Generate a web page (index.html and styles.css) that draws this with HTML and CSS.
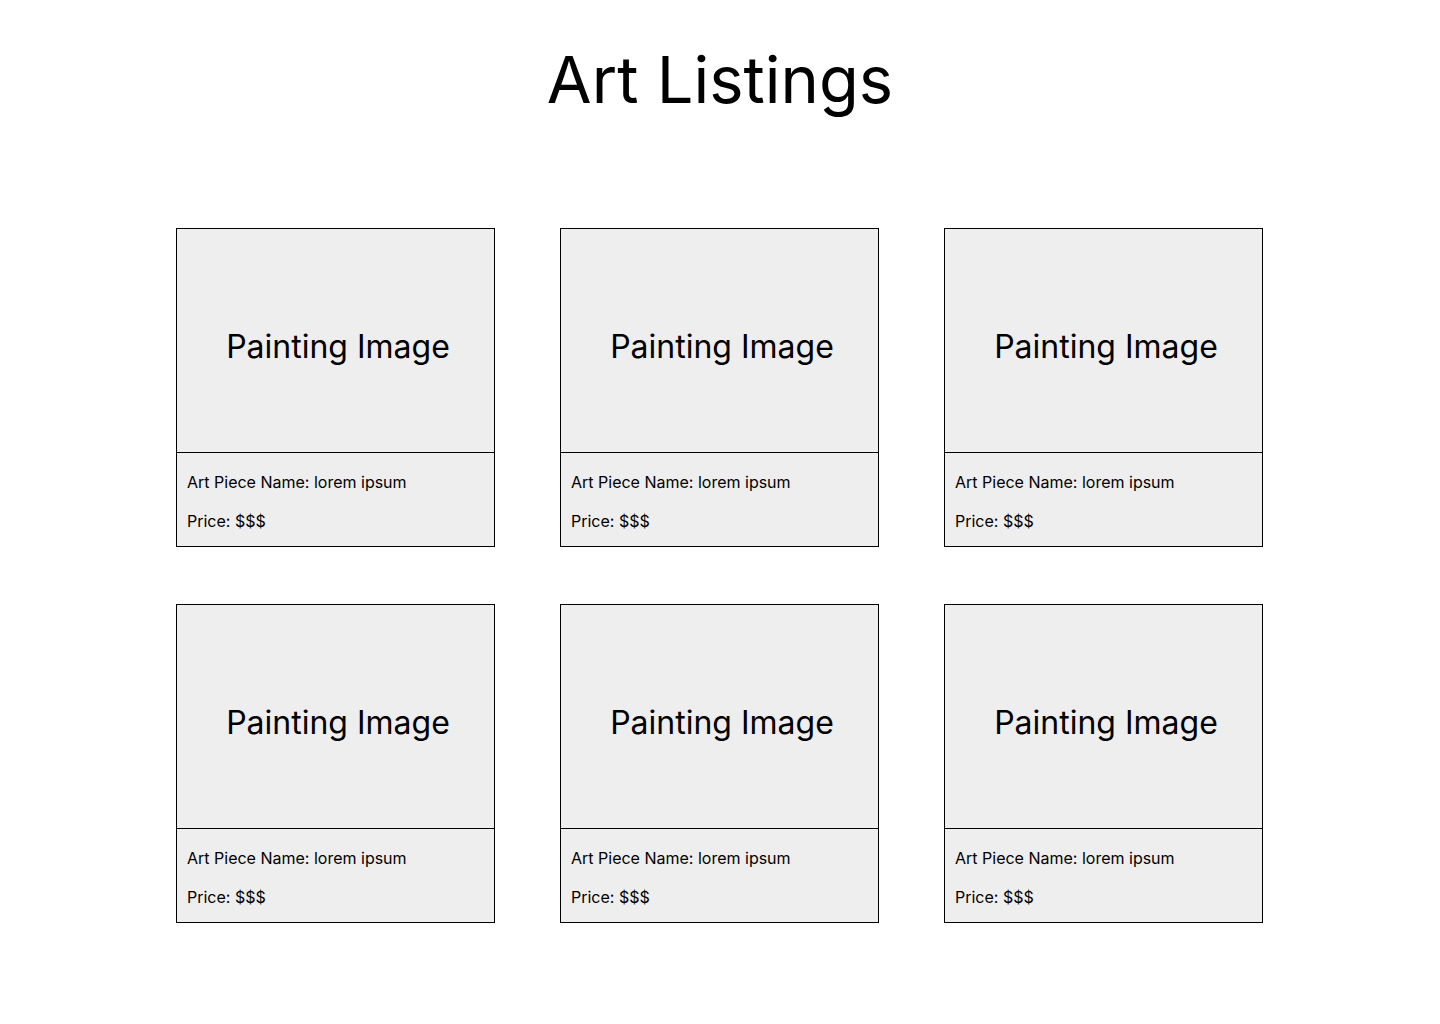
FILE: index.html
```html
<!DOCTYPE html>
<html lang="en">
<head>
<meta charset="utf-8">
<title>Art Listings</title>
<link rel="stylesheet" href="styles.css">
</head>
<body>
<h1 class="title">Art Listings</h1>
<main class="grid">
  <div class="card">
    <div class="card-image">Painting Image</div>
    <div class="card-info"><p>Art Piece Name: lorem ipsum</p><p>Price: $$$</p></div>
  </div>
  <div class="card">
    <div class="card-image">Painting Image</div>
    <div class="card-info"><p>Art Piece Name: lorem ipsum</p><p>Price: $$$</p></div>
  </div>
  <div class="card">
    <div class="card-image">Painting Image</div>
    <div class="card-info"><p>Art Piece Name: lorem ipsum</p><p>Price: $$$</p></div>
  </div>
  <div class="card">
    <div class="card-image">Painting Image</div>
    <div class="card-info"><p>Art Piece Name: lorem ipsum</p><p>Price: $$$</p></div>
  </div>
  <div class="card">
    <div class="card-image">Painting Image</div>
    <div class="card-info"><p>Art Piece Name: lorem ipsum</p><p>Price: $$$</p></div>
  </div>
  <div class="card">
    <div class="card-image">Painting Image</div>
    <div class="card-info"><p>Art Piece Name: lorem ipsum</p><p>Price: $$$</p></div>
  </div>
</main>
</body>
</html>
```
FILE: styles.css
```css
* { box-sizing: border-box; }
html, body { margin: 0; padding: 0; background: #ffffff; }
body {
  font-family: Inter, "Noto Sans", sans-serif;
  color: #000000;
}
.title {
  margin: 41px 0 0;
  font-size: 65px;
  font-weight: 400;
  line-height: 77px;
  text-align: center;
}
.grid {
  display: grid;
  grid-template-columns: repeat(3, 319px);
  column-gap: 65px;
  row-gap: 57px;
  justify-content: start;
  padding-left: 176px;
  margin-top: 110px;
}
.card {
  width: 319px;
  height: 319px;
  border: 1px solid #000000;
  background: #eeeeee;
  display: flex;
  flex-direction: column;
}
.card-image {
  height: 224px;
  border-bottom: 1px solid #000000;
  display: flex;
  align-items: center;
  justify-content: center;
  font-size: 32px;
  line-height: 39px;
  padding: 11px 0 0 5px;
}
.card-info {
  flex: 1;
  padding: 20px 10px 0;
  display: flex;
  flex-direction: column;
  gap: 19px;
}
.card-info p {
  margin: 0;
  font-size: 16px;
  line-height: 19.5px;
}
```
